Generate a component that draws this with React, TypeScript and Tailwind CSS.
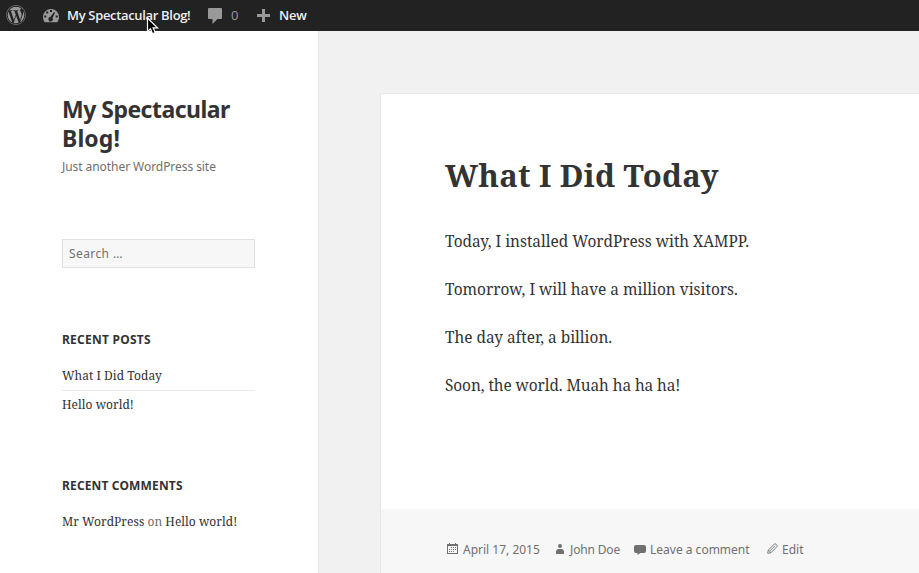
import { FaWordpress } from "react-icons/fa";

function DashboardIcon() {
  return (
    <svg className="h-5 w-5 shrink-0" viewBox="0 0 20 20" fill="#999">
      <path
        fillRule="evenodd"
        d="M3.8 16.200C2.600 14.800 2 13 2 11a8 8 0 0 1 16 0c0 2-.6 3.800-1.800 5.200zM9 4v2h2V4zM5.200 5.500v2h2v-2zM13 6 9.300 11.100a2.200 2.200 0 1 0 2.200 1L14 6.600zM3.300 9.500v2h2v-2zm11.400 0v2h2v-2z"
      />
    </svg>
  );
}

function Cursor() {
  return (
    <svg className="absolute left-[146px] top-[17px]" width="13" height="19" viewBox="0 0 13 19">
      <path d="M1.500 1v13.500l3-2.800 2 5 2.700-1.100-2.100-4.800h4.400z" fill="#000" stroke="#fff" strokeWidth="1.200" />
    </svg>
  );
}

function AdminBar() {
  return (
    <header className="flex h-[31px] shrink-0 items-center bg-[#222] pl-1.5 font-['Open_Sans',sans-serif] text-[13px] leading-[31px] text-[#eee]">
      <FaWordpress className="mb-px h-5 w-5 text-[#999]" />
      <div className="ml-[15px] flex items-center">
        <DashboardIcon />
        <span className="ml-1.5 w-[124px] whitespace-nowrap font-semibold tracking-[-0.33px]">My Spectacular Blog!</span>
      </div>
      <svg className="ml-[17px] h-4 w-3.5" viewBox="0 0 14 16" fill="#999">
        <path d="M1 0h12q1 0 1 1v9q0 1-1 1H9.500L4.500 16v-5H1q-1 0-1-1V1q0-1 1-1z" />
      </svg>
      <span className="ml-[9px] w-2 text-[#999]">0</span>
      <svg className="ml-[18px] h-[13px] w-[13px]" viewBox="0 0 13 13" fill="#999">
        <path d="M5 0h3v5h5v3H8v5H5V8H0V5h5z" />
      </svg>
      <span className="ml-[9px] font-semibold tracking-[-0.2px]">New</span>
    </header>
  );
}

function Sidebar() {
  return (
    <aside className="flex w-[319px] shrink-0 flex-col border-r border-[#e7e7e7] bg-white pl-[62px] pr-[63px] pt-[64px] text-[#333]">
      <h1 className="whitespace-nowrap font-['Noto_Sans',sans-serif] text-[23px] font-bold leading-[29px]">
        <span className="tracking-[-0.52px]">My Spectacular</span>
        <br />
        <span className="tracking-[0.1px]">Blog!</span>
      </h1>
      <p className="mt-1 whitespace-nowrap font-['Noto_Sans',sans-serif] text-[12px] leading-5 tracking-[-0.06px] text-[#707070]">
        Just another WordPress site
      </p>
      <input
        className="mt-[62px] h-[29px] w-full border border-[#e1e1e1] bg-[#f7f7f7] px-1.5 font-['Noto_Sans',sans-serif] text-[12px] tracking-[0.4px] outline-none placeholder:text-[#707070]"
        placeholder="Search …"
      />
      <h2 className="mt-[62px] font-['Noto_Sans',sans-serif] text-[12px] font-bold leading-5 tracking-[0.25px]">RECENT POSTS</h2>
      <ul className="mt-3 font-['Noto_Serif','DejaVu_Serif_Condensed',serif] text-[12px] leading-[18px] tracking-[0.04px]">
        <li className="h-[29px] border-b border-[#eaeaea] pt-[5px]">What I Did Today</li>
        <li className="h-[29px] pt-[5px]">Hello world!</li>
      </ul>
      <h2 className="mt-[56px] font-['Noto_Sans',sans-serif] text-[12px] font-bold leading-5 tracking-[0.15px]">RECENT COMMENTS</h2>
      <p className="mt-[17px] whitespace-nowrap font-['Noto_Serif','DejaVu_Serif_Condensed',serif] text-[12px] leading-[18px] tracking-[0.03px]">
        Mr WordPress <span className="text-[#707070]">on</span> Hello world!
      </p>
    </aside>
  );
}

function Meta() {
  return (
    <footer className="flex h-[64px] items-center bg-[#f7f7f7] pl-[66px] pt-[17px] font-['Noto_Sans',sans-serif] text-[12px] text-[#707070]">
      <svg className="mb-0.5 h-[11px] w-[11px]" viewBox="0 0 11 11" fill="#707070">
        <path fillRule="evenodd" d="M0 1h2V0h1v1h5V0h1v1h2v10H0zm1 2v7h9V3z" />
        <path d="M4 4h1v1H4zm2 0h1v1H6zm2 0h1v1H8zM2 6h1v1H2zm2 0h1v1H4zm2 0h1v1H6zm2 0h1v1H8zM2 8h1v1H2zm2 0h1v1H4zm2 0h1v1H6z" />
      </svg>
      <span className="ml-[5px] w-[77px] whitespace-nowrap">April 17, 2015</span>
      <svg className="mb-0.5 ml-4 h-[10px] w-2" viewBox="0 0 8 10" fill="#707070">
        <circle cx="4" cy="2" r="2" />
        <path d="M0 10V7.500Q0 5 2.300 5h3.400Q8 5 8 7.500V10z" />
      </svg>
      <span className="ml-1.5 w-[51px] whitespace-nowrap tracking-[-0.15px]">John Doe</span>
      <svg className="ml-[13px] h-[10px] w-3" viewBox="0 0 12 10" fill="#707070">
        <path d="M2 0h8Q12 0 12 2v4Q12 8 10 8H6.500L3.500 10V8H2Q0 8 0 6V2Q0 0 2 0z" />
      </svg>
      <span className="ml-1 w-[100px] whitespace-nowrap">Leave a comment</span>
      <svg className="mb-0.5 ml-[17px] h-[11px] w-[11px]" viewBox="0 0 11 11" fill="none" stroke="#707070" strokeWidth=".9">
        <path d="M.7 10.300 1.300 7 7.200 1.200Q8.100.3 9 1.200l.8.8q.9.9 0 1.800L4 9.700zM1.300 7 4 9.700M3 7.800 8 2.800" />
      </svg>
      <span className="ml-1">Edit</span>
    </footer>
  );
}

const paragraphs = [
  "Today, I installed WordPress with XAMPP.",
  "Tomorrow, I will have a million visitors.",
  "The day after, a billion.",
  "Soon, the world. Muah ha ha ha!",
];

export default function App() {
  return (
    <div className="relative flex h-[573px] w-[919px] flex-col overflow-hidden bg-[#f1f1f1]">
      <AdminBar />
      <div className="flex min-h-0 flex-1">
        <Sidebar />
        <main className="min-w-0 flex-1 pl-[61px] pt-[62px]">
          <article className="flex h-full flex-col border-l border-t border-[#e7e7e7] bg-white text-[#333]">
            <div className="flex-1 pl-16 pt-[61px] font-['Noto_Serif','DejaVu_Serif_Condensed',serif]">
              <h2 className="whitespace-nowrap text-[31px] font-bold leading-10 tracking-[0.2px]">What I Did Today</h2>
              <div className="mt-[35px] flex flex-col gap-6 text-[15.4px] leading-6">
                {paragraphs.map((text) => (
                  <p key={text} className="last:tracking-[-0.08px]">{text}</p>
                ))}
              </div>
            </div>
            <Meta />
          </article>
        </main>
      </div>
      <Cursor />
    </div>
  );
}
